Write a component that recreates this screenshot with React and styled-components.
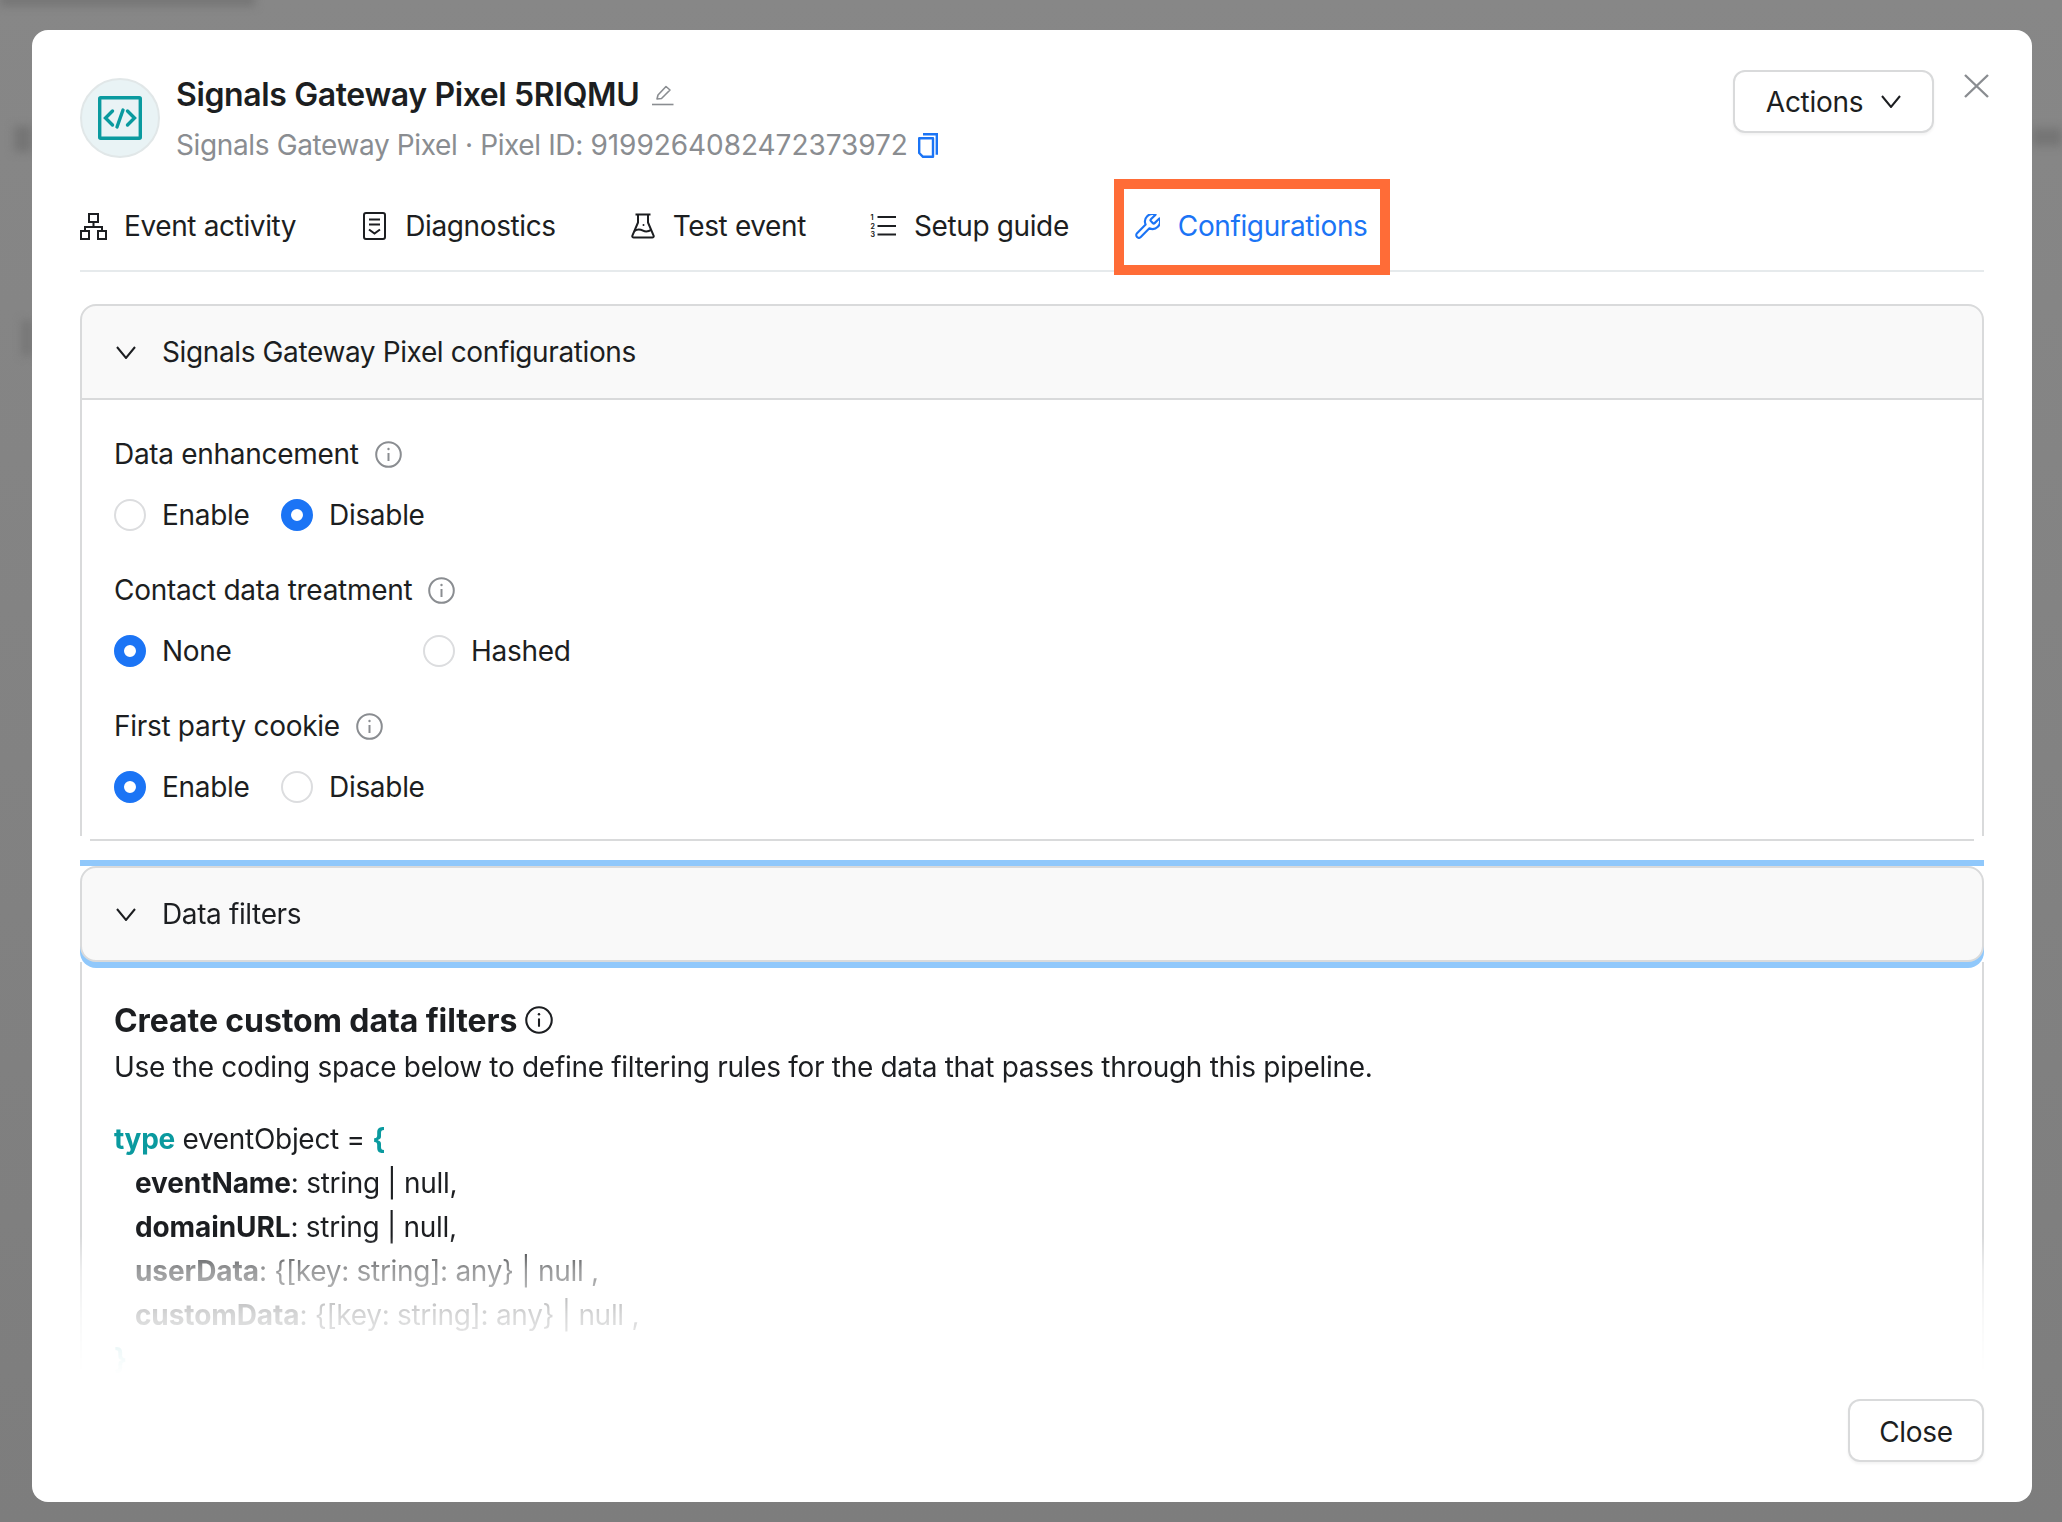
import styled, { createGlobalStyle } from "styled-components"

const GlobalStyle = createGlobalStyle`
  html, body { margin: 0; padding: 0; }
  body {
    width: 2062px;
    height: 1522px;
    overflow: hidden;
    font-family: Inter, "Liberation Sans", sans-serif;
    letter-spacing: -0.3px;
    color: #1c1e21;
  }
`

const text = "#1c1e21"
const gray = "#8a8d91"
const blue = "#1b74f5"
const teal = "#0a9a9f"
const line = "#d9dadb"

const Page = styled.div`
  position: relative;
  width: 2062px;
  height: 1522px;
  padding: 30px 30px 20px 32px;
  box-sizing: border-box;
  background: linear-gradient(#878787, #7d7d7d);
  overflow: hidden;
`

const BackdropSmudge = styled.div`
  position: absolute;
  left: ${p => p.$x}px;
  top: ${p => p.$y}px;
  width: ${p => p.$w}px;
  height: ${p => p.$h}px;
  background: #757575;
  filter: blur(4px);
`

const Modal = styled.div`
  position: relative;
  width: 2000px;
  height: 1472px;
  padding: 40px 48px 40px;
  box-sizing: border-box;
  background: #fff;
  border-radius: 16px;
  display: flex;
  flex-direction: column;
`

const Header = styled.div`
  display: flex;
  align-items: flex-start;
  height: 88px;
  flex: none;
`

const Avatar = styled.div`
  width: 80px;
  height: 80px;
  margin-top: 8px;
  box-sizing: border-box;
  border-radius: 50%;
  background: #e9f3f5;
  border: 2px solid #e1e7e8;
  display: flex;
  align-items: center;
  justify-content: center;
  flex: none;
`

const TitleBlock = styled.div`
  margin: 5px 0 0 16px;
  display: flex;
  flex-direction: column;
  gap: 12px;
`

const TitleRow = styled.div`
  display: flex;
  align-items: center;
  gap: 13px;
  height: 40px;
`

const Title = styled.div`
  font-size: 32px;
  line-height: 40px;
  font-weight: 600;
  letter-spacing: -0.38px;
  color: ${text};
`

const SubRow = styled.div`
  display: flex;
  align-items: center;
  gap: 10px;
  height: 36px;
`

const Sub = styled.div`
  font-size: 28px;
  line-height: 36px;
  letter-spacing: -0.37px;
  color: ${gray};
`

const PixelId = styled.span`
  letter-spacing: -0.05px;
`

const HeaderActions = styled.div`
  margin-left: auto;
  display: flex;
  align-items: flex-start;
  gap: 30px;
`

const Button = styled.div`
  height: 63px;
  box-sizing: border-box;
  border: 2px solid ${line};
  border-radius: 12px;
  background: #fff;
  box-shadow: 0 2px 3px rgba(0, 0, 0, 0.05);
  font-size: 28px;
  color: ${text};
  display: flex;
  align-items: center;
  justify-content: center;
`

const ActionsButton = styled(Button)`
  width: 201px;
  gap: 18px;
`

const CloseButton = styled(Button)`
  width: 136px;
  padding-top: 2px;
`

const CloseIcon = styled.svg`
  margin: 4px -5px 0 0;
`

const TabBar = styled.div`
  flex: none;
  display: flex;
  padding: 44px 0 20px;
  border-bottom: 2px solid #e6eaec;
`

const Tab = styled.div`
  position: relative;
  display: flex;
  align-items: center;
  height: 48px;
  gap: ${p => p.$gap}px;
  margin-right: ${p => p.$after}px;
  font-size: 28px;
  letter-spacing: -0.38px;
  color: ${p => (p.$active ? blue : text)};

  ${p => p.$active && `
    &::after {
      content: "";
      position: absolute;
      left: -21px;
      right: -23px;
      top: -23px;
      bottom: -25px;
      border: 10px solid #ff6c37;
      pointer-events: none;
    }
  `}
`

const Sections = styled.div`
  flex: 1;
  min-height: 0;
  margin-top: 32px;
  display: flex;
  flex-direction: column;
`

const SectionHead = styled.div`
  height: 96px;
  box-sizing: border-box;
  display: flex;
  align-items: center;
  padding-left: 34px;
  gap: 26px;
  font-size: 28px;
  letter-spacing: -0.38px;
  background: #f9f9f9;
  border: 2px solid ${line};
  border-radius: ${p => (p.$closed ? "16px" : "16px 16px 0 0")};
  box-shadow: ${p => (p.$closed ? "0 6px 0 0 #90c8fb" : "none")};
  position: relative;
  flex: none;
`

const SectionBody = styled.div`
  padding: 35px 32px 31px;
  border: 2px solid ${line};
  border-top: 0;
  border-bottom: 0;
`

const SectionEnd = styled.div`
  height: 2px;
  margin: 3px 10px 0;
  background: ${line};
  flex: none;
`

const Field = styled.div`
  & + & {
    margin-top: 38px;
  }
`

const Label = styled.div`
  display: flex;
  align-items: center;
  gap: 16px;
  height: 36px;
  padding-top: 2px;
  box-sizing: border-box;
  font-size: 28px;
`

const RadioRow = styled.div`
  display: flex;
  align-items: center;
  margin-top: 26px;
  height: 36px;
`

const Radio = styled.div`
  display: flex;
  align-items: center;
  gap: 16px;
  width: ${p => p.$w}px;
  font-size: 28px;
`

const RadioDot = styled.span`
  width: 32px;
  height: 32px;
  box-sizing: border-box;
  border-radius: 50%;
  flex: none;
  background: #fff;
  border: ${p => (p.$on ? `10px solid ${blue}` : `2px solid #dcdddf`)};
`

const DropLine = styled.div`
  height: 6px;
  margin-top: 19px;
  background: #90c8fb;
  flex: none;
`

const FilterSection = styled.div`
  flex: none;
  height: 509px;
  overflow: hidden;
  display: flex;
  flex-direction: column;
  mask-image: linear-gradient(
    to bottom,
    #000 0,
    #000 370px,
    rgba(0, 0, 0, 0.45) 404px,
    rgba(0, 0, 0, 0.18) 449px,
    rgba(0, 0, 0, 0.04) 493px,
    transparent 509px
  );
`

const FilterBody = styled.div`
  flex: 1;
  padding: 38px 32px 0;
  border: 2px solid ${line};
  border-top: 0;
  border-bottom: 0;
`

const FilterTitle = styled.div`
  display: flex;
  align-items: center;
  gap: 8px;
  height: 40px;
  font-size: 32px;
  font-weight: 700;
  letter-spacing: -0.08px;
`

const Description = styled.div`
  margin-top: 9px;
  font-size: 28px;
  line-height: 36px;
`

const Code = styled.div`
  margin-top: 32px;
  font-size: 28px;
  line-height: 44px;
`

const CodeLine = styled.div`
  padding-left: ${p => (p.$indent ? 21 : 0)}px;
  white-space: pre;
`

const Key = styled.b`
  font-weight: 700;
  letter-spacing: -0.1px;
`

const Teal = styled.span`
  color: ${teal};
  font-weight: 700;
`

const Footer = styled.div`
  flex: none;
  margin-top: auto;
  display: flex;
  justify-content: flex-end;
`

const Stroke = ({ w, h, children, color = text, sw = 2 }) => (
  <svg width={w} height={h} viewBox={`0 0 ${w} ${h}`} fill="none" stroke={color} strokeWidth={sw} style={{ flex: "none" }}>
    {children}
  </svg>
)

const CodeIcon = () => (
  <svg width="44" height="44" viewBox="0 0 44 44" fill="none" stroke={teal} strokeWidth="3.4">
    <rect x="1.7" y="1.7" width="40.6" height="40.6" rx="1" />
    <path d="M14.5 15 7.5 22l7 7M29.5 15l7 7-7 7M25 14l-6 17" strokeLinecap="round" />
  </svg>
)

const Pencil = () => (
  <Stroke w={22} h={22} color={gray} sw={1.6}>
    <path d="M5 15 6 11 14 2.5l4 3.5-8.5 8.5z" strokeLinejoin="round" />
    <path d="M0 20.5h21.5" />
  </Stroke>
)

const CopyIcon = () => (
  <Stroke w={20} h={25} color={blue} sw={2.4}>
    <path d="M5 1.2h13.8v20.5" />
    <path d="M1.2 5.2h13.8v18.6H5L1.2 20z" strokeLinejoin="round" />
  </Stroke>
)

const HierarchyIcon = () => (
  <Stroke w={27} h={27}>
    <rect x="9" y="1" width="9" height="8" />
    <rect x="1" y="18" width="8" height="8" />
    <rect x="18" y="18" width="8" height="8" />
    <path d="M13.5 9v5M5 18v-4h17v4" />
  </Stroke>
)

const DiagnosticsIcon = () => (
  <Stroke w={23} h={28}>
    <rect x="1" y="1" width="21" height="26" rx="2" />
    <path d="M6 7.5h11M6 12.5h11M6 17.5l5.5 4 5.5-4" />
  </Stroke>
)

const FlaskIcon = () => (
  <Stroke w={24} h={26}>
    <path d="M4.5 1.5h15M7 1.5v8L1.4 22.6c-.4 1 .3 2 1.4 2h18.4c1.1 0 1.8-1 1.4-2L17 9.5v-8" strokeLinejoin="round" />
    <path d="M3.5 18c3-2.4 5.5-2 8.5-.4s5.5 1 8.5-1" />
    <circle cx="12.5" cy="12" r="1" fill={text} stroke="none" />
  </Stroke>
)

const NumberedIcon = () => (
  <svg width="26" height="24" viewBox="0 0 26 24" fill="none" style={{ flex: "none" }}>
    <path d="M7.5 3h18.5M7.5 12h18.5M7.5 20.5h18.5" stroke={text} strokeWidth="2" />
    <g fill={text} fontSize="7" fontWeight="700" fontFamily="Inter, sans-serif">
      <text x="0.5" y="6">1</text>
      <text x="0.5" y="14.5">2</text>
      <text x="0.5" y="23">3</text>
    </g>
  </svg>
)

const WrenchIcon = () => (
  <svg width="25" height="25" viewBox="2 2 20 20" fill="none" stroke={blue} strokeWidth="1.7" strokeLinejoin="round" style={{ flex: "none" }}>
    <path d="M14.7 6.3a1 1 0 0 0 0 1.4l1.6 1.6a1 1 0 0 0 1.4 0l3.77-3.77a6 6 0 0 1-7.94 7.94l-6.91 6.91a2.12 2.12 0 0 1-3-3l6.91-6.91a6 6 0 0 1 7.94-7.94l-3.76 3.76z" />
  </svg>
)

const Chevron = ({ w = 20, h = 13, color = text }) => (
  <Stroke w={w} h={h} color={color} sw={2}>
    <path d={`M1 1l${w / 2 - 1} ${h - 2} ${w / 2 - 1} ${-(h - 2)}`} />
  </Stroke>
)

const InfoIcon = ({ size = 27, color = gray }) => (
  <svg width={size} height={size} viewBox="0 0 27 27" fill="none" stroke={color} strokeWidth="2" style={{ flex: "none" }}>
    <circle cx="13.5" cy="13.5" r="12.3" />
    <path d="M13.5 12v8" />
    <circle cx="13.5" cy="8" r="1.2" fill={color} stroke="none" />
  </svg>
)

const tabs = [
  { label: "Event activity", icon: <HierarchyIcon />, gap: 17, after: 67 },
  { label: "Diagnostics", icon: <DiagnosticsIcon />, gap: 19, after: 75 },
  { label: "Test event", icon: <FlaskIcon />, gap: 18, after: 64 },
  { label: "Setup guide", icon: <NumberedIcon />, gap: 18, after: 66 },
  { label: "Configurations", icon: <WrenchIcon />, gap: 18, after: 0, active: true },
]

const fields = [
  { label: "Data enhancement", options: [["Enable", false, 167], ["Disable", true, 160]] },
  { label: "Contact data treatment", options: [["None", true, 309], ["Hashed", false, 160]] },
  { label: "First party cookie", options: [["Enable", true, 167], ["Disable", false, 160]] },
]

export default function App() {
  return (
    <Page>
      <GlobalStyle />
      <BackdropSmudge $x={0} $y={-6} $w={255} $h={12} />
      <BackdropSmudge $x={14} $y={126} $w={18} $h={26} />
      <BackdropSmudge $x={2032} $y={128} $w={30} $h={18} />
      <BackdropSmudge $x={22} $y={320} $w={10} $h={36} />
      <Modal>
        <Header>
          <Avatar><CodeIcon /></Avatar>
          <TitleBlock>
            <TitleRow>
              <Title>Signals Gateway Pixel 5RIQMU</Title>
              <Pencil />
            </TitleRow>
            <SubRow>
              <Sub>Signals Gateway Pixel · Pixel ID: <PixelId>9199264082472373972</PixelId></Sub>
              <CopyIcon />
            </SubRow>
          </TitleBlock>
          <HeaderActions>
            <ActionsButton>Actions <Chevron /></ActionsButton>
            <CloseIcon width="25" height="24" viewBox="0 0 25 24" fill="none" stroke={gray} strokeWidth="2.4">
              <path d="M1 1l23 22M24 1 1 23" />
            </CloseIcon>
          </HeaderActions>
        </Header>

        <TabBar>
          {tabs.map(t => (
            <Tab key={t.label} $gap={t.gap} $after={t.after} $active={t.active}>
              {t.icon}
              {t.label}
            </Tab>
          ))}
        </TabBar>

        <Sections>
          <SectionHead>
            <Chevron />
            Signals Gateway Pixel configurations
          </SectionHead>
          <SectionBody>
            {fields.map(f => (
              <Field key={f.label}>
                <Label>{f.label} <InfoIcon /></Label>
                <RadioRow>
                  {f.options.map(([name, on, w]) => (
                    <Radio key={name} $w={w}>
                      <RadioDot $on={on} />
                      {name}
                    </Radio>
                  ))}
                </RadioRow>
              </Field>
            ))}
          </SectionBody>
          <SectionEnd />
          <DropLine />
          <FilterSection>
            <SectionHead $closed>
              <Chevron />
              Data filters
            </SectionHead>
            <FilterBody>
              <FilterTitle>Create custom data filters <InfoIcon size={28} color={text} /></FilterTitle>
              <Description>Use the coding space below to define filtering rules for the data that passes through this pipeline.</Description>
              <Code>
                <CodeLine><Teal>type</Teal> eventObject = <Teal>{"{"}</Teal></CodeLine>
                <CodeLine $indent><Key>eventName</Key>: string | null,</CodeLine>
                <CodeLine $indent><Key>domainURL</Key>: string | null,</CodeLine>
                <CodeLine $indent><Key>userData</Key>: {"{[key: string]: any}"} | null ,</CodeLine>
                <CodeLine $indent><Key>customData</Key>: {"{[key: string]: any}"} | null ,</CodeLine>
                <CodeLine><Teal>{"}"}</Teal></CodeLine>
              </Code>
            </FilterBody>
          </FilterSection>
        </Sections>

        <Footer>
          <CloseButton>Close</CloseButton>
        </Footer>
      </Modal>
    </Page>
  )
}
